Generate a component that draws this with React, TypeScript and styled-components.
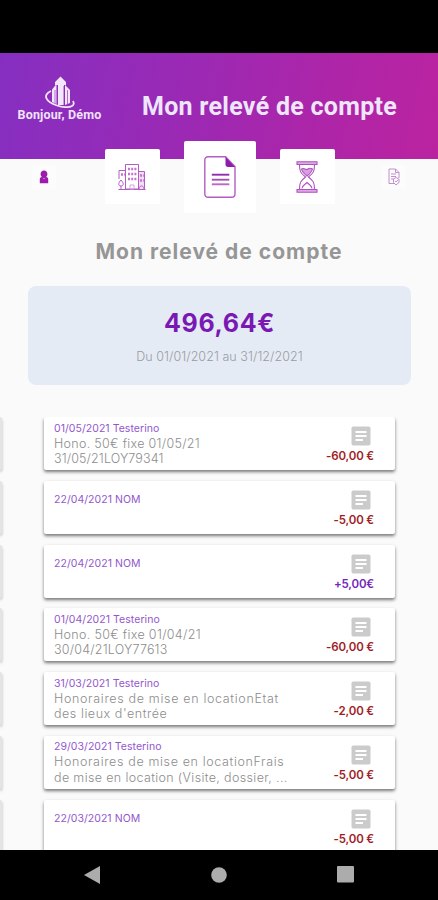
import React from "react";
import styled, { createGlobalStyle } from "styled-components";

const GlobalStyle = createGlobalStyle`
  * { box-sizing: border-box; }
  body { margin: 0; background: #000; font-family: "Inter", sans-serif; }
`;

const Phone = styled.div`
  width: 438px;
  height: 900px;
  display: flex;
  flex-direction: column;
  background: #fafafa;
  overflow: hidden;
`;

const StatusBar = styled.div`
  height: 52.5px;
  flex: none;
  background: #000;
`;

const Header = styled.header`
  height: 106px;
  flex: none;
  display: flex;
  align-items: flex-start;
  padding-left: 15px;
  background: linear-gradient(102deg, #852fc1 0%, #9b29b4 43%, #ae25a8 74%, #bb23a0 100%);
`;

const Brand = styled.div`
  width: 89px;
  padding-top: 23px;
  display: flex;
  flex-direction: column;
  align-items: center;
  svg { display: block; }
`;

const Greeting = styled.div`
  font: 700 12.5px/14px Roboto, sans-serif;
  letter-spacing: 0.15px;
  color: #f1e3fb;
  white-space: nowrap;
`;

const HeaderTitle = styled.h1`
  margin: 39px 0 0 38px;
  font: 700 25px/30px Roboto, sans-serif;
  letter-spacing: 0.28px;
  color: #eee6fb;
  white-space: nowrap;
`;

const Tabs = styled.nav`
  height: 72px;
  flex: none;
  margin-top: -18px;
  display: grid;
  grid-template-columns: 88px 88px 88px 86px 88px;
  align-items: center;
  justify-items: center;
`;

const Tab = styled.button<{ $size: number }>`
  width: ${(p) => p.$size}px;
  height: ${(p) => p.$size}px;
  border: 0;
  border-radius: 2px;
  padding: 0;
  display: grid;
  place-items: center;
  background: ${(p) => (p.$size < 40 ? "#fcfcfc" : "#fff")};
  svg { display: block; }
`;

const PageTitle = styled.h2`
  margin: 26.5px 0 0;
  font-weight: 700;
  font-size: 21px;
  line-height: 26px;
  letter-spacing: 1px;
  text-align: center;
  color: #969696;
`;

const Summary = styled.section`
  flex: none;
  width: 383px;
  height: 99px;
  margin: 20.5px 0 0 28px;
  border-radius: 8px;
  background: #e5ebf4;
  text-align: center;
  padding-top: 21px;
`;

const Balance = styled.div`
  font-weight: 700;
  font-size: 25px;
  line-height: 32px;
  letter-spacing: 0.65px;
  color: #7a18b4;
`;

const Period = styled.div`
  margin-top: 9px;
  font-weight: 300;
  font-size: 12.5px;
  line-height: 18px;
  letter-spacing: 0.06px;
  color: #999ca2;
`;

const Pager = styled.main`
  flex: 1;
  min-height: 0;
  margin-top: 32.5px;
  display: grid;
  grid-template-columns: 2px 351px;
  column-gap: 42px;
  overflow: hidden;
  align-items: start;
`;

const List = styled.div`
  display: grid;
  grid-auto-rows: 53px;
  row-gap: 10.75px;
`;

const Card = styled.article`
  display: flex;
  justify-content: space-between;
  background: #fff;
  border-radius: 2px;
  padding: 0 21px 0 10px;
  box-shadow: 0 2px 3px rgba(0, 0, 0, 0.4), 0 2px 4px rgba(0, 0, 0, 0.16);
`;

const PreviousCard = styled.div`
  background: #e4e4e4;
  border-radius: 0 2px 2px 0;
  box-shadow: 0 2px 3px rgba(0, 0, 0, 0.3);
`;

const Details = styled.div<{ $single: boolean }>`
  padding-top: ${(p) => (p.$single ? 12.5 : 4.5)}px;
  white-space: nowrap;
`;

const Meta = styled.div`
  font-size: 10.5px;
  line-height: 14px;
  letter-spacing: 0.05px;
  color: #9357cd;
`;

const Line = styled.div<{ $spacing: number }>`
  font-size: 12.5px;
  font-weight: 300;
  line-height: 15.5px;
  letter-spacing: ${(p) => p.$spacing}px;
  color: #8d8d8d;
`;

const Side = styled.div`
  display: flex;
  flex-direction: column;
  align-items: flex-end;
  padding-top: 9px;
  svg { display: block; margin-right: 3px; }
`;

const Amount = styled.div<{ $credit: boolean }>`
  margin-top: 3px;
  font-weight: 600;
  font-size: 11.5px;
  line-height: 15px;
  letter-spacing: -0.15px;
  white-space: nowrap;
  color: ${(p) => (p.$credit ? "#7425ba" : "#a01c24")};
`;

const SystemNav = styled.footer`
  height: 50.5px;
  flex: none;
  background: #000;
  display: grid;
  grid-template-columns: 184px 70px 183px;
  align-items: center;
  justify-items: center;
  svg { display: block; }
`;

const Logo = () => (
  <svg width="32" height="32" viewBox="0 0 32 32" fill="none">
    <g fill="#f3e6fb">
      <path d="M16.5.5 22 6v3h-2v20h-6V9h-3V6z" />
      <path d="M8 13.5 12.5 8v20L8 26z" />
      <path d="m21 9 5 5v13l-5 2z" />
    </g>
    <path d="M11 14v14M13.4 10v19M19.9 10v19M23.5 14v14" stroke="#9637b9" strokeWidth=".7" />
    <path d="M7 15C-2 19 2 26 13 29.5c7 2.3 15 2.4 16.5-1.2.5-1.4.2-2.4-.8-3.2" stroke="#f3e6fb" strokeWidth="1.8" />
  </svg>
);

const PersonIcon = () => (
  <svg width="10" height="14" viewBox="0 0 10 14" fill="#9d1cac">
    <path d="M5 .5c2 0 3.4 1.4 3.4 3.4 0 1.3-.6 2.3-1.3 3C8.5 7.3 9.2 8 9.2 9.3v3.9H.8V9.3C.8 8 1.5 7.3 2.9 6.9 2.2 6.2 1.6 5.2 1.6 3.9 1.6 1.9 3 .5 5 .5z" />
    <path d="m3.8 8 1.2 1 1.2-1" fill="none" stroke="#dba5df" strokeWidth=".7" />
  </svg>
);

const BuildingIcon = () => (
  <svg width="28" height="28" viewBox="0 0 28 28" fill="none" stroke="#b35dc2" strokeWidth="1">
    <path d="M20.5 8.5h6V26h-6z" fill="#f3dcf5" stroke="none" />
    <path d="M7.5 26V1.5h13V26zM20.5 8.5h6V26M7.5 7.5H1V16M.5 26.5h27" />
    <path d="M12 22h4v4h-4z" stroke="#d9a3e0" />
    <path d="M10 6h8.5M10 11h8.5M10 16h8.5M22 12.5h4M22 17.5h4M3 11.5h4" strokeWidth="2.5" strokeDasharray="2 1.2" stroke="#be77cc" />
    <path d="M3 17c-3 3-3 6 0 6s3-3 0-6zM3 23v3M21 26c0-4 5-4 5 0" />
  </svg>
);

const DocumentIcon = () => (
  <svg width="32" height="42" viewBox="0 0 32 42" fill="none">
    <path d="M4 .8h17.5L31 10.5v27.2c0 2-1.3 3.5-3.3 3.5H4C2 41.2.8 39.7.8 37.7V4C.8 2 2 .8 4 .8z" stroke="#b55bc5" strokeWidth="1.4" />
    <path d="M21.5 1 31 11h-7c-1.5 0-2.5-1-2.5-2.5z" fill="#8e1bab" />
    <path d="M7.8 18.7h17.5" stroke="#902cad" strokeWidth="1.9" />
    <path d="M7.8 23.7h17.5" stroke="#a94bbb" strokeWidth="1.9" />
    <path d="M7.8 28.3h17.5" stroke="#bd66c6" strokeWidth="1.9" />
  </svg>
);

const HourglassIcon = () => (
  <svg width="22" height="32" viewBox="0 0 22 32" fill="none" stroke="#b052c2" strokeWidth="1.1">
    <path d="M1 .8h20v2.7H1zM1 28.5h20v2.7H1z" fill="#dca9e2" />
    <path d="M3.5 3.5c0 7 1 8.500 6 12.500-5 4-6 5.500-6 12.500M18.500 3.500c0 7-1 8.500-6 12.500 5 4 6 5.500 6 12.500" />
    <path d="M5.5 8c3-2 4 2 6.500 0s3 0 4.500 0c-.6 3-2.500 4.500-5.500 7-3-2.500-5-4-5.500-7z" fill="#d7a0df" />
    <path d="M6 27.5c0-3 2-3 5-6 3 3 5 3 5 6" />
  </svg>
);

const ReportIcon = () => (
  <svg width="12" height="18" viewBox="0 0 12 18" fill="none" stroke="#bd83c9" strokeWidth=".9">
    <path d="M6.5 15.5H1V1h6.5L11 4.500V10M7.500 1v3.500H11M3 6h5M3 8.500h5M3 11h3" />
    <path d="m8 9.5 3 1.500v3.500L8 17l-2.500-2.500V11zM6.800 13l1.200 1 2-2" />
  </svg>
);

const NoteIcon = () => (
  <svg width="20" height="20" viewBox="0 0 20 20">
    <rect x=".5" y=".5" width="19" height="19" rx="1.8" fill="#cbcbcb" />
    <path d="M4.5 6h11M4.5 10h11M4.5 14h7.5" stroke="#fff" strokeWidth="1.9" />
  </svg>
);

type Entry = { meta: string; lines: { text: string; spacing: number }[]; amount: string };

const entries: Entry[] = [
  { meta: "01/05/2021 Testerino", lines: [{ text: "Hono. 50€ fixe 01/05/21", spacing: 0.31 }, { text: "31/05/21LOY79341", spacing: 0.12 }], amount: "-60,00 €" },
  { meta: "22/04/2021 NOM", lines: [], amount: "-5,00 €" },
  { meta: "22/04/2021 NOM", lines: [], amount: "+5,00€" },
  { meta: "01/04/2021 Testerino", lines: [{ text: "Hono. 50€ fixe 01/04/21", spacing: 0.33 }, { text: "30/04/21LOY77613", spacing: 0.2 }], amount: "-60,00 €" },
  { meta: "31/03/2021 Testerino", lines: [{ text: "Honoraires de mise en locationEtat", spacing: 0.67 }, { text: "des lieux d'entrée", spacing: 0.55 }], amount: "-2,00 €" },
  { meta: "29/03/2021 Testerino", lines: [{ text: "Honoraires de mise en locationFrais", spacing: 0.64 }, { text: "de mise en location (Visite, dossier, ...", spacing: 0.36 }], amount: "-5,00 €" },
  { meta: "22/03/2021 NOM", lines: [], amount: "-5,00 €" },
];

const App: React.FC = () => (
  <>
    <GlobalStyle />
    <Phone>
      <StatusBar />
      <Header>
        <Brand>
          <Logo />
          <Greeting>Bonjour, Démo</Greeting>
        </Brand>
        <HeaderTitle>Mon relevé de compte</HeaderTitle>
      </Header>
      <Tabs>
        <Tab $size={24} aria-label="Profil"><PersonIcon /></Tab>
        <Tab $size={55} aria-label="Biens"><BuildingIcon /></Tab>
        <Tab $size={72} aria-label="Relevé"><DocumentIcon /></Tab>
        <Tab $size={55} aria-label="Attente"><HourglassIcon /></Tab>
        <Tab $size={24} aria-label="Rapports"><ReportIcon /></Tab>
      </Tabs>
      <PageTitle>Mon relevé de compte</PageTitle>
      <Summary>
        <Balance>496,64€</Balance>
        <Period>Du 01/01/2021 au 31/12/2021</Period>
      </Summary>
      <Pager>
        <List>
          {entries.map((_, i) => <PreviousCard key={i} />)}
        </List>
        <List>
          {entries.map((e, i) => (
            <Card key={i}>
              <Details $single={e.lines.length === 0}>
                <Meta>{e.meta}</Meta>
                {e.lines.map((l) => <Line key={l.text} $spacing={l.spacing}>{l.text}</Line>)}
              </Details>
              <Side>
                <NoteIcon />
                <Amount $credit={e.amount.startsWith("+")}>{e.amount}</Amount>
              </Side>
            </Card>
          ))}
        </List>
      </Pager>
      <SystemNav>
        <svg width="16" height="18" viewBox="0 0 16 18"><path d="M0 9 16 0v18z" fill="#acacac" /></svg>
        <svg width="16" height="16" viewBox="0 0 16 16"><circle cx="8" cy="8" r="7.8" fill="#acacac" /></svg>
        <svg width="17" height="17" viewBox="0 0 17 17"><rect width="17" height="16.5" rx="1" fill="#acacac" /></svg>
      </SystemNav>
    </Phone>
  </>
);

export default App;
